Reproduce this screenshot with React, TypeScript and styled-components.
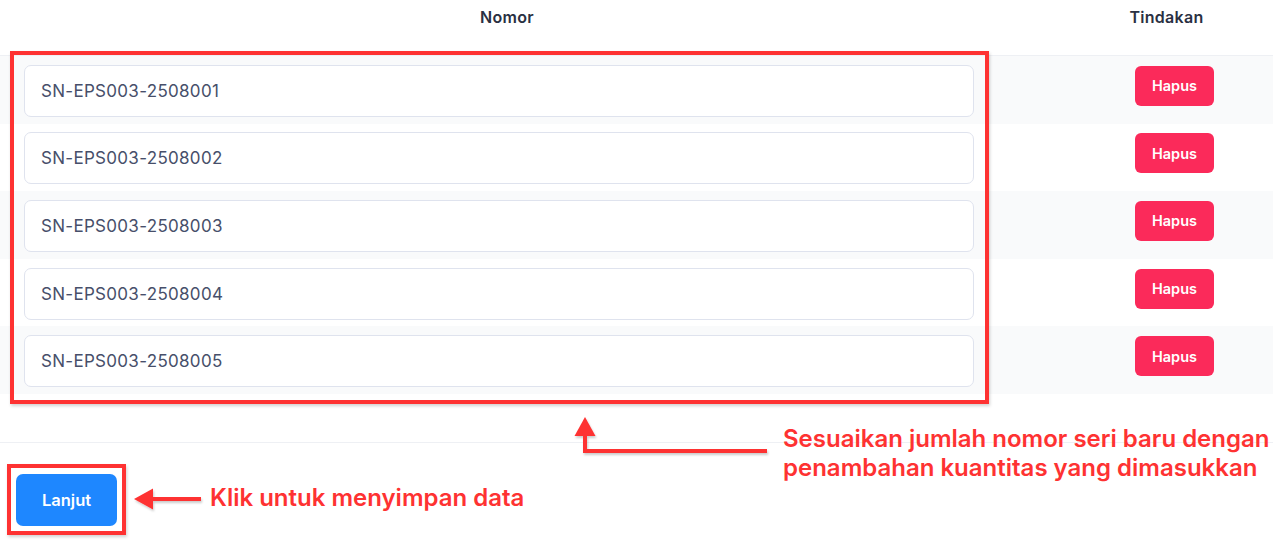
import React from 'react'
import styled, { createGlobalStyle } from 'styled-components'

const GlobalStyle = createGlobalStyle`
  html, body {
    margin: 0;
    padding: 0;
    background: #ffffff;
  }
  body {
    font-family: Inter, 'Noto Sans', 'Liberation Sans', sans-serif;
    -webkit-font-smoothing: antialiased;
  }
`

const Page = styled.div`
  position: relative;
  width: 1273px;
  height: 545px;
  overflow: hidden;
  background: #ffffff;
`

const Table = styled.div`
  display: flex;
  flex-direction: column;
`

const HeaderRow = styled.div`
  display: grid;
  grid-template-columns: 1014px 1fr;
  height: 56px;
  align-items: center;
  border-bottom: 1px solid #eef0f4;
  box-sizing: border-box;
`

const HeaderCell = styled.div<{ $pad?: number }>`
  font-size: 16px;
  font-weight: 600;
  letter-spacing: 0.3px;
  color: #2a3042;
  text-align: center;
  padding-left: ${({ $pad }) => ($pad ? $pad + 'px' : '0')};
  margin-top: -22px;
`

const BodyRow = styled.div<{ $striped?: boolean }>`
  display: grid;
  grid-template-columns: 1014px 1fr;
  height: 67.6px;
  align-items: center;
  background: ${({ $striped }) => ($striped ? '#f9fafb' : '#ffffff')};
`

const InputCell = styled.div`
  padding-left: 24px;
  padding-right: 40px;
  padding-top: 2px;
`

const SerialInput = styled.input`
  display: block;
  width: 100%;
  height: 52px;
  box-sizing: border-box;
  border: 1px solid #dfe3ee;
  border-radius: 7px;
  background: #ffffff;
  padding: 0 16px;
  font-family: Inter, 'Noto Sans', 'Liberation Sans', sans-serif;
  font-size: 17px;
  letter-spacing: 0.3px;
  color: #474f6a;
  outline: none;
`

const ActionCell = styled.div`
  padding-left: 121px;
  display: flex;
  align-items: center;
`

const DeleteButton = styled.button`
  width: 79px;
  height: 40px;
  border: none;
  border-radius: 6px;
  background: #fb2a5a;
  color: #ffffff;
  font-family: Inter, 'Noto Sans', 'Liberation Sans', sans-serif;
  font-size: 14.5px;
  font-weight: 600;
  margin-top: -8px;
  cursor: pointer;
`

const TableFooter = styled.div`
  height: 48px;
  border-bottom: 1px solid #eef0f4;
`

const Actions = styled.div`
  display: flex;
  padding: 31px 0 0 16px;
`

const PrimaryButton = styled.button`
  width: 101px;
  height: 52px;
  border: none;
  border-radius: 7px;
  background: #1e87ff;
  color: #ffffff;
  font-family: Inter, 'Noto Sans', 'Liberation Sans', sans-serif;
  font-size: 16.5px;
  font-weight: 600;
  cursor: pointer;
`

/* annotation overlay */
const Highlight = styled.div<{ $x: number; $y: number; $w: number; $h: number }>`
  position: absolute;
  left: ${({ $x }) => $x}px;
  top: ${({ $y }) => $y}px;
  width: ${({ $w }) => $w}px;
  height: ${({ $h }) => $h}px;
  box-sizing: border-box;
  border: 4px solid #fe3232;
  box-shadow: 1px 2px 3px rgba(0, 0, 0, 0.18);
  pointer-events: none;
`

const ArrowSvg = styled.svg`
  position: absolute;
  left: 0;
  top: 0;
  pointer-events: none;
  overflow: visible;
`

const Note = styled.div<{ $x: number; $y: number }>`
  position: absolute;
  left: ${({ $x }) => $x}px;
  top: ${({ $y }) => $y}px;
  font-size: 24px;
  font-weight: 600;
  line-height: 29px;
  color: #fe3232;
  white-space: nowrap;
`

const serials = [
  'SN-EPS003-2508001',
  'SN-EPS003-2508002',
  'SN-EPS003-2508003',
  'SN-EPS003-2508004',
  'SN-EPS003-2508005',
]

export default function App() {
  return (
    <Page>
      <GlobalStyle />
      <Table>
        <HeaderRow>
          <HeaderCell>Nomor</HeaderCell>
          <HeaderCell $pad={46}>Tindakan</HeaderCell>
        </HeaderRow>
        {serials.map((sn, i) => (
          <BodyRow key={sn} $striped={i % 2 === 0}>
            <InputCell>
              <SerialInput defaultValue={sn} />
            </InputCell>
            <ActionCell>
              <DeleteButton>Hapus</DeleteButton>
            </ActionCell>
          </BodyRow>
        ))}
        <TableFooter />
      </Table>
      <Actions>
        <PrimaryButton>Lanjut</PrimaryButton>
      </Actions>

      <Highlight $x={10} $y={51} $w={979} $h={353} />
      <Highlight $x={7} $y={464} $w={119} $h={71} />

      <ArrowSvg width="1273" height="545">
        <defs>
          <filter id="sh" x="-10%" y="-10%" width="130%" height="130%">
            <feDropShadow dx="1" dy="2" stdDeviation="1.2" floodColor="#000" floodOpacity="0.2" />
          </filter>
        </defs>
        <g filter="url(#sh)" fill="#fe3232" stroke="none">
          <polygon points="585,417 574.5,436 595.5,436" />
          <rect x="583" y="434" width="4" height="19" />
          <rect x="583" y="449" width="184" height="4" />
          <polygon points="134,499 153,488.5 153,509.5" />
          <rect x="151" y="497" width="50" height="4" />
        </g>
      </ArrowSvg>

      <Note $x={783} $y={424}>
        Sesuaikan jumlah nomor seri baru dengan
        <br />
        penambahan kuantitas yang dimasukkan
      </Note>
      <Note $x={210} $y={483}>Klik untuk menyimpan data</Note>
    </Page>
  )
}
